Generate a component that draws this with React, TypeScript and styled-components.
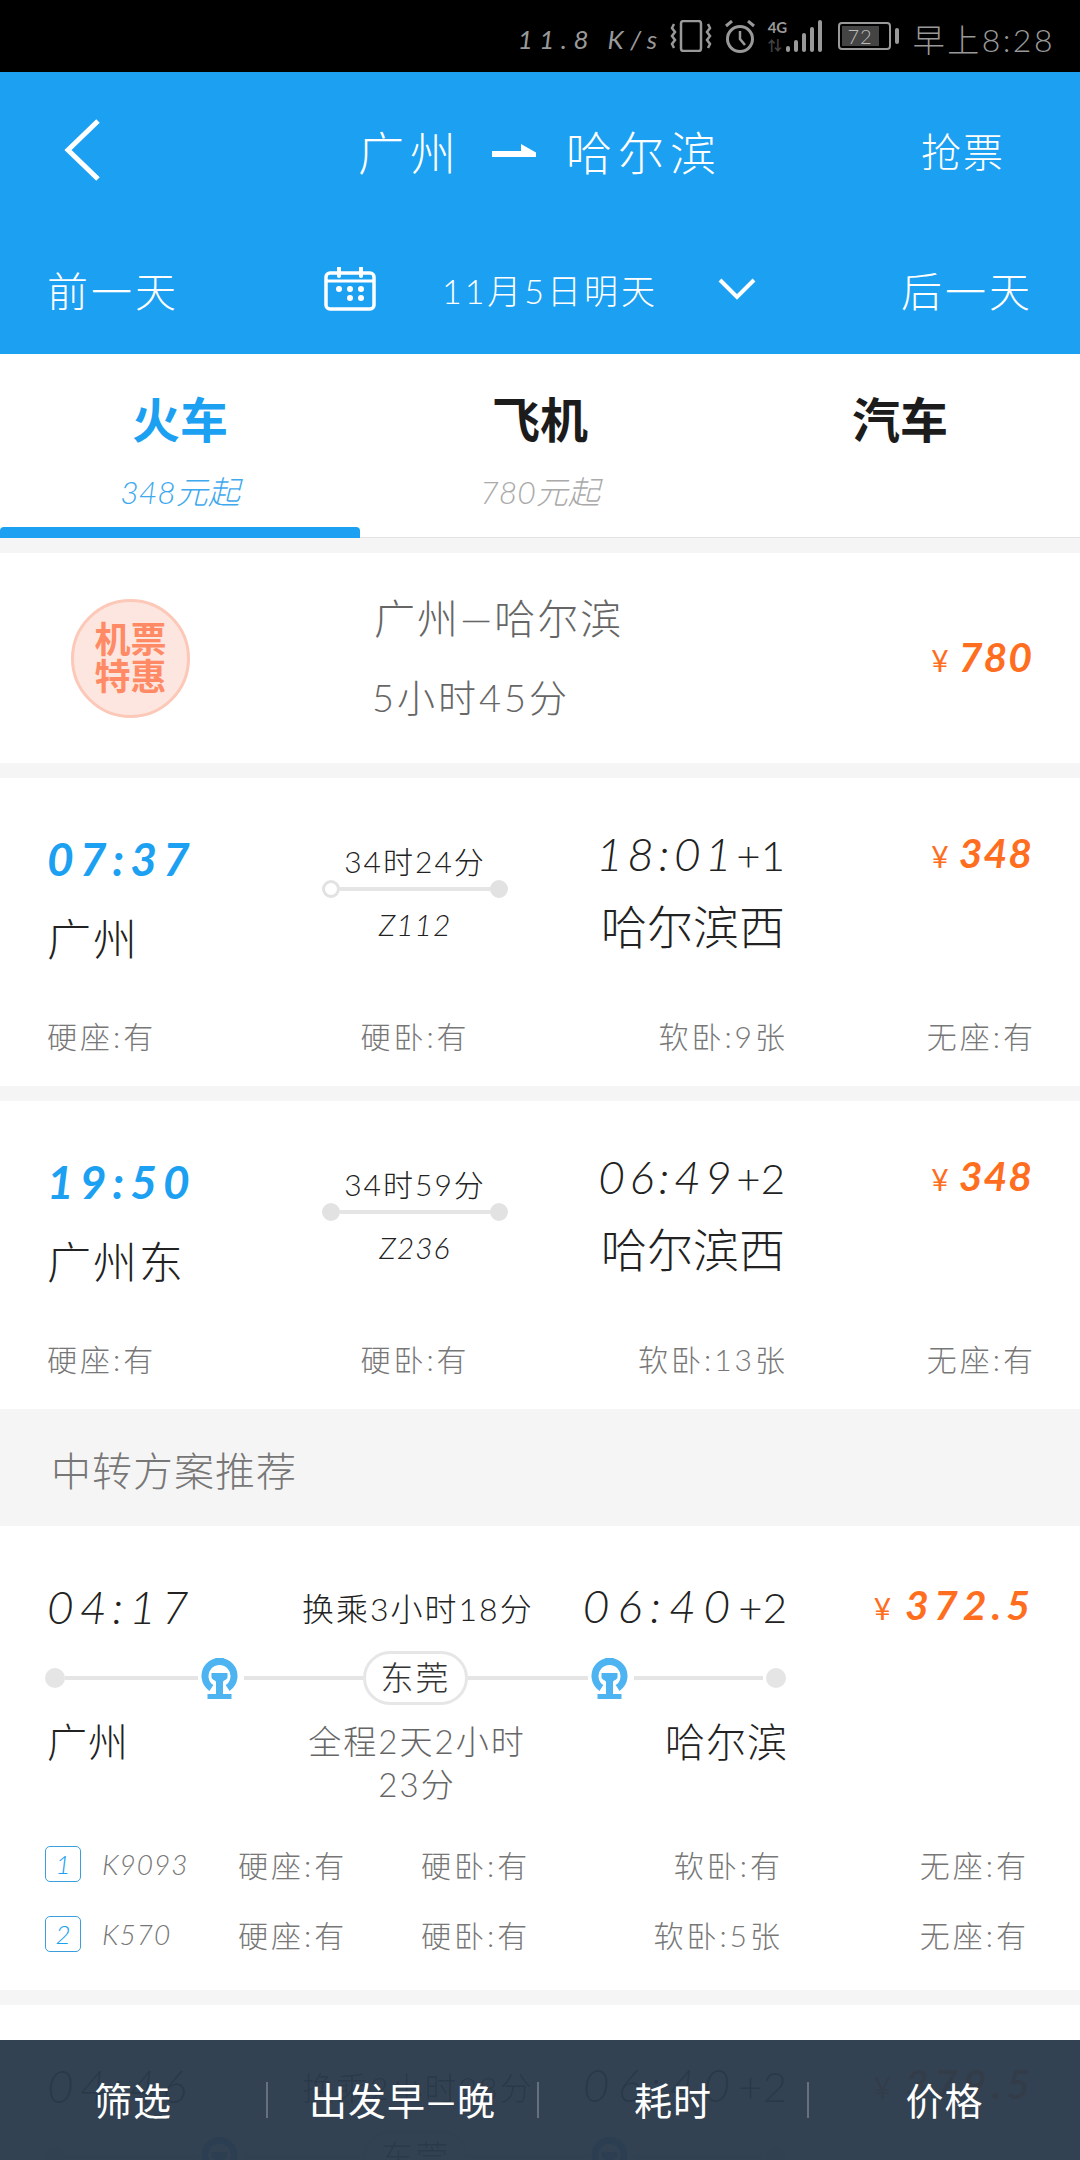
import styled, { createGlobalStyle } from "styled-components";

const FONT = `Lato, "Noto Sans CJK SC", sans-serif`;

const GlobalStyle = createGlobalStyle`
  html, body {
    margin: 0;
    padding: 0;
    background: #f5f5f5;
  }
  body {
    font-family: ${FONT};
    font-weight: 300;
  }
`;

type Seat = string;

const directTrains = [
  {
    depart: "07:37",
    from: "广州",
    duration: "34时24分",
    number: "Z112",
    arrive: "18:01",
    plus: "+1",
    to: "哈尔滨西",
    price: "348",
    hollow: true,
    seats: ["硬座:有", "硬卧:有", "软卧:9张", "无座:有"],
  },
  {
    depart: "19:50",
    from: "广州东",
    duration: "34时59分",
    number: "Z236",
    arrive: "06:49",
    plus: "+2",
    to: "哈尔滨西",
    price: "348",
    hollow: false,
    seats: ["硬座:有", "硬卧:有", "软卧:13张", "无座:有"],
  },
];

const transfers = [
  {
    depart: "04:17",
    wait: "换乘3小时18分",
    arrive: "06:40",
    price: "372.5",
    from: "广州",
    total: "全程2天2小时23分",
    to: "哈尔滨",
    legs: [
      { no: "K9093", seats: ["硬座:有", "硬卧:有", "软卧:有", "无座:有"] },
      { no: "K570", seats: ["硬座:有", "硬卧:有", "软卧:5张", "无座:有"] },
    ],
  },
  {
    depart: "04:46",
    wait: "换乘2小时28分",
    arrive: "06:40",
    price: "379.5",
    from: "",
    total: "",
    to: "",
    legs: [],
  },
];

function Chevron() {
  return (
    <svg width="38" height="22" viewBox="0 0 38 22">
      <polyline points="2,2 19,19 36,2" fill="none" stroke="#fff" strokeWidth="4" />
    </svg>
  );
}

function BackIcon() {
  return (
    <svg width="38" height="62" viewBox="0 0 38 62">
      <polyline points="35,2 5,31 35,60" fill="none" stroke="#fff" strokeWidth="5" />
    </svg>
  );
}

function HalfArrow() {
  return (
    <svg width="44" height="13" viewBox="0 0 44 13">
      <path d="M0 7h29V0l15 8.500v4.500H0z" fill="#fff" />
    </svg>
  );
}

function CalendarIcon() {
  return (
    <svg width="52" height="44" viewBox="0 0 52 44" fill="none" stroke="#fff">
      <rect x="2" y="6" width="48" height="36" rx="4" strokeWidth="3.5" />
      <line x1="2" y1="14" x2="50" y2="14" strokeWidth="3" />
      <line x1="15" y1="1" x2="15" y2="9" strokeWidth="4" strokeLinecap="round" />
      <line x1="37" y1="1" x2="37" y2="9" strokeWidth="4" strokeLinecap="round" />
      <g fill="#fff" stroke="none">
        <circle cx="15" cy="22" r="3" />
        <circle cx="26" cy="22" r="3" />
        <circle cx="37" cy="22" r="3" />
        <circle cx="26" cy="31" r="3" />
        <circle cx="37" cy="31" r="3" />
      </g>
    </svg>
  );
}

function RailLogo() {
  return (
    <LogoSvg width="37" height="41" viewBox="0 0 37 41" fill="#4db3f1">
      <path d="M14.500 0h8l1.500 4h-11z" />
      <path
        d="M10.400 30A14.500 14.500 0 1 1 26.600 30"
        fill="none"
        stroke="#4db3f1"
        strokeWidth="7"
      />
      <path d="M10.500 15h16v4c0 3-4 3-4.500 5v12h8.500v5h-24v-5H15V24c-.5-2-4.500-2-4.500-5z" />
    </LogoSvg>
  );
}

function VibrateIcon() {
  return (
    <svg width="42" height="32" viewBox="0 0 42 32" fill="none" stroke="#999">
      <rect x="11" y="1" width="20" height="30" rx="2.500" strokeWidth="2.500" />
      <path d="M4 4l-2 4 3 4-3 4 3 4-3 4 2 4" strokeWidth="2.500" />
      <path d="M38 4l2 4-3 4 3 4-3 4 3 4-2 4" strokeWidth="2.500" />
    </svg>
  );
}

function AlarmIcon() {
  return (
    <svg width="32" height="33" viewBox="0 0 32 33" fill="none" stroke="#999">
      <circle cx="16" cy="19" r="12.500" strokeWidth="3" />
      <path d="M16 11v8l5 6" strokeWidth="2.500" />
      <path d="M2 6l6-5M30 6l-6-5" strokeWidth="3" />
    </svg>
  );
}

function SignalIcon() {
  return (
    <svg width="36" height="33" viewBox="0 0 36 33" fill="#999">
      <rect x="0" y="26" width="4" height="6" rx="2" />
      <rect x="8" y="20" width="4" height="12" rx="2" />
      <rect x="16" y="13" width="4" height="19" rx="2" />
      <rect x="24" y="7" width="4" height="25" rx="2" />
      <rect x="32" y="0" width="4" height="32" rx="2" />
    </svg>
  );
}

function Price({ value, large }: { value: string; large?: boolean }) {
  return (
    <PriceBox $large={large}>
      <Yen>¥</Yen>
      {value}
    </PriceBox>
  );
}

function Clock({
  value,
  plus,
  accent,
  spacing = 6,
}: {
  value: string;
  plus?: string;
  accent?: boolean;
  spacing?: number;
}) {
  return (
    <ClockText $accent={accent} $spacing={spacing}>
      {value}
      {plus && <Plus>{plus}</Plus>}
    </ClockText>
  );
}

export default function App() {
  return (
    <Page>
      <GlobalStyle />
      <StatusBar>
        <StatusText>11.8 K/s</StatusText>
        <StatusIcons>
          <VibrateIcon />
          <AlarmIcon />
          <Network>
            <NetworkLabel>
              4G
              <NetworkArrows>⇅</NetworkArrows>
            </NetworkLabel>
            <SignalIcon />
          </Network>
        </StatusIcons>
        <Battery>
          <BatteryFill>72</BatteryFill>
        </Battery>
        <StatusTime>早上8:28</StatusTime>
      </StatusBar>

      <Header>
        <TitleRow>
          <BackButton>
            <BackIcon />
          </BackButton>
          <Title>
            <span>广州</span>
            <HalfArrow />
            <span>哈尔滨</span>
          </Title>
          <GrabLink>抢票</GrabLink>
        </TitleRow>
        <DateRow>
          <DayLink>前一天</DayLink>
          <DatePicker>
            <CalendarIcon />
            <DateText>11月5日明天</DateText>
            <Chevron />
          </DatePicker>
          <DayLink $right>后一天</DayLink>
        </DateRow>
      </Header>

      <Tabs>
        <Tab>
          <TabName $active>火车</TabName>
          <TabSub $active>348元起</TabSub>
          <TabBar />
        </Tab>
        <Tab>
          <TabName>飞机</TabName>
          <TabSub>780元起</TabSub>
        </Tab>
        <Tab>
          <TabName>汽车</TabName>
        </Tab>
      </Tabs>

      <PromoCard>
        <PromoBadge>
          机票
          <br />
          特惠
        </PromoBadge>
        <PromoInfo>
          <div>广州—哈尔滨</div>
          <PromoDuration>5小时45分</PromoDuration>
        </PromoInfo>
        <Price value="780" />
      </PromoCard>

      {directTrains.map((t) => (
        <TrainCard key={t.number}>
          <DepartCol>
            <Clock value={t.depart} accent />
            <FromStation>{t.from}</FromStation>
          </DepartCol>
          <MiddleCol>
            <Duration>{t.duration}</Duration>
            <Track>
              <TrackDot $hollow={t.hollow} />
              <TrackLine />
              <TrackDot />
            </Track>
            <TrainNo>{t.number}</TrainNo>
          </MiddleCol>
          <ArriveCol>
            <Clock value={t.arrive} plus={t.plus} spacing={4.5} />
            <ToStation>{t.to}</ToStation>
          </ArriveCol>
          <PriceCol>
            <Price value={t.price} />
          </PriceCol>
          {t.seats.map((s: Seat, i) => (
            <SeatCell key={i} $right={i > 1} $center={i === 1}>
              {s}
            </SeatCell>
          ))}
        </TrainCard>
      ))}

      <SectionTitle>中转方案推荐</SectionTitle>

      {transfers.map((t) => (
        <TransferCard key={t.depart}>
          <TransferTop>
            <Clock value={t.depart} />
            <WaitText>{t.wait}</WaitText>
            <RightCell>
              <Clock value={t.arrive} plus="+2" spacing={8} />
            </RightCell>
            <RightCell>
              <Price value={t.price} large />
            </RightCell>
          </TransferTop>
          <Timeline>
            <EndDot />
            <LineSeg $w={133} />
            <RailLogo />
            <LineSeg $w={119} />
            <TransferPill>东莞</TransferPill>
            <LineSeg $w={120} />
            <RailLogo />
            <LineSeg $w={129} />
            <EndDot />
          </Timeline>
          <Stations>
            <StationName>{t.from}</StationName>
            <TotalText>{t.total}</TotalText>
            <StationName $right>{t.to}</StationName>
          </Stations>
          <Legs>
            {t.legs.map((leg, i) => (
              <LegRow key={leg.no}>
                <LegName>
                  <LegIndex>{i + 1}</LegIndex>
                  <LegNo>{leg.no}</LegNo>
                </LegName>
                {leg.seats.map((s: Seat, j) => (
                  <LegSeat key={j} $right={j > 1}>
                    {s}
                  </LegSeat>
                ))}
              </LegRow>
            ))}
          </Legs>
        </TransferCard>
      ))}

      <BottomBar>
        <BottomItem>筛选</BottomItem>
        <BottomItem>出发早—晚</BottomItem>
        <BottomItem>耗时</BottomItem>
        <BottomItem>价格</BottomItem>
      </BottomBar>
    </Page>
  );
}

const Page = styled.div`
  position: relative;
  width: 1080px;
  height: 2160px;
  overflow: hidden;
  background: #f5f5f5;
`;

const StatusBar = styled.div`
  height: 72px;
  background: #000;
  color: #999;
  display: flex;
  align-items: center;
  justify-content: flex-end;
  padding-right: 25px;
`;

const StatusText = styled.span`
  margin-top: 6px;
  font-size: 26px;
  font-weight: 400;
  font-style: italic;
  letter-spacing: 6.5px;
  margin-right: 6px;
`;

const StatusIcons = styled.div`
  display: flex;
  align-items: center;
  gap: 12px;
  margin-right: 16px;
`;

const Network = styled.div`
  display: flex;
  align-items: flex-start;
`;

const NetworkLabel = styled.span`
  width: 18px;
  display: flex;
  flex-direction: column;
  font-size: 15px;
  font-weight: 700;
  line-height: 15px;
`;

const NetworkArrows = styled.span`
  margin-top: 2px;
  font-size: 14px;
  line-height: 16px;
  color: #444;
`;

const Battery = styled.div`
  position: relative;
  width: 53px;
  height: 28px;
  box-sizing: border-box;
  border: 2px solid #999;
  border-radius: 4px;
  padding: 2px;
  margin-right: 22px;

  &::after {
    content: "";
    position: absolute;
    right: -10px;
    top: 4px;
    width: 4px;
    height: 16px;
    border-radius: 2px;
    background: #999;
  }
`;

const BatteryFill = styled.div`
  width: 37px;
  height: 20px;
  background: #444;
  color: #bbb;
  font-size: 20px;
  line-height: 20px;
  text-align: center;
  letter-spacing: 1px;
`;

const StatusTime = styled.span`
  margin-top: 4px;
  font-size: 32px;
  letter-spacing: 2.5px;
`;

const Header = styled.header`
  height: 282px;
  background: #1ca0f2;
  color: #fff;
`;

const TitleRow = styled.div`
  height: 156px;
  padding: 0 75px;
  display: grid;
  grid-template-columns: 1fr auto 1fr;
  align-items: center;
`;

const BackButton = styled.div`
  margin-left: -12px;
  display: flex;
`;

const Title = styled.div`
  display: flex;
  align-items: center;
  gap: 30px;
  font-size: 46px;
  letter-spacing: 6px;
`;

const GrabLink = styled.div`
  justify-self: end;
  font-size: 40px;
  letter-spacing: 2px;
`;

const DateRow = styled.div`
  height: 122px;
  padding: 0 47px;
  display: grid;
  grid-template-columns: 1fr auto 1fr;
  align-items: center;
`;

const DayLink = styled.div<{ $right?: boolean }>`
  font-size: 41px;
  letter-spacing: 3px;
  text-align: ${(p) => (p.$right ? "right" : "left")};
`;

const DatePicker = styled.div`
  display: flex;
  align-items: center;
  gap: 66px;
`;

const DateText = styled.span`
  font-size: 34px;
  letter-spacing: 3px;
  margin-right: -6px;
`;

const Tabs = styled.div`
  height: 184px;
  background: #fff;
  box-shadow: inset 0 -1px #e3e3e3;
  display: grid;
  grid-template-columns: repeat(3, 360px);
`;

const Tab = styled.div`
  display: flex;
  flex-direction: column;
  align-items: center;
`;

const TabName = styled.div<{ $active?: boolean }>`
  margin-top: 38px;
  font-size: 48px;
  line-height: 56px;
  font-weight: 700;
  color: ${(p) => (p.$active ? "#1ca0f2" : "#1c1c1c")};
`;

const TabSub = styled.div<{ $active?: boolean }>`
  margin-top: 24px;
  font-size: 32px;
  line-height: 40px;
  font-style: italic;
  color: ${(p) => (p.$active ? "#3fa9ee" : "#aaa")};
`;

const TabBar = styled.div`
  margin-top: auto;
  width: 100%;
  height: 11px;
  background: #1ca0f2;
  border-radius: 4px 4px 0 0;
`;

const PromoCard = styled.section`
  height: 210px;
  margin: 15px 0;
  background: #fff;
  display: flex;
  align-items: center;
  padding: 0 47px 0 71px;
`;

const PromoBadge = styled.div`
  box-sizing: border-box;
  width: 119px;
  height: 119px;
  flex-shrink: 0;
  border-radius: 50%;
  border: 3px solid #fcc8b8;
  background: #fde6df;
  color: #ff8a65;
  font-size: 36px;
  font-weight: 700;
  line-height: 37px;
  text-align: center;
  display: flex;
  align-items: center;
  justify-content: center;
`;

const PromoInfo = styled.div`
  flex: 1;
  margin-left: 184px;
  color: #666;
  font-size: 41px;
  line-height: 79px;
  letter-spacing: 2px;
`;

const PromoDuration = styled.div`
  font-size: 38px;
  letter-spacing: 3px;
  margin-left: -2px;
`;

const PriceBox = styled.div<{ $large?: boolean }>`
  color: #ff6d1f;
  font-size: 41px;
  line-height: 50px;
  font-weight: 700;
  font-style: italic;
  letter-spacing: ${(p) => (p.$large ? "5px" : "1px")};
  white-space: nowrap;
`;

const Yen = styled.span`
  font-size: 30px;
  font-weight: 400;
  font-style: normal;
  margin-right: 9px;
`;

const ClockText = styled.div<{ $accent?: boolean; $spacing: number }>`
  color: ${(p) => (p.$accent ? "#1ca0f2" : "#222")};
  font-size: 46px;
  line-height: 50px;
  font-style: italic;
  font-weight: ${(p) => (p.$accent ? 700 : 300)};
  letter-spacing: ${(p) => p.$spacing}px;
  white-space: nowrap;
`;

const Plus = styled.span`
  font-size: 42px;
  font-style: normal;
  letter-spacing: 0;
`;

const TrainCard = styled.section`
  box-sizing: border-box;
  height: 308px;
  margin-bottom: 15px;
  padding: 0 47px;
  background: #fff;
  display: grid;
  grid-template-columns: 275px 186px 277px 248px;
  grid-template-rows: 236px 44px;
`;

const DepartCol = styled.div`
  padding-top: 56px;
`;

const FromStation = styled.div`
  margin-top: 28px;
  font-size: 44px;
  line-height: 54px;
  color: #222;
  letter-spacing: 2px;
`;

const MiddleCol = styled.div`
  padding-top: 65px;
  display: flex;
  flex-direction: column;
  align-items: center;
`;

const Duration = styled.div`
  font-size: 30px;
  line-height: 36px;
  color: #222;
  letter-spacing: 2px;
  white-space: nowrap;
`;

const Track = styled.div`
  width: 100%;
  height: 20px;
  display: flex;
  align-items: center;
`;

const TrackDot = styled.div<{ $hollow?: boolean }>`
  box-sizing: border-box;
  width: 18px;
  height: 18px;
  flex-shrink: 0;
  border-radius: 50%;
  border: 3px solid #e2e2e2;
  background: ${(p) => (p.$hollow ? "#fff" : "#e2e2e2")};
`;

const TrackLine = styled.div`
  flex: 1;
  height: 4px;
  background: #e5e5e5;
`;

const TrainNo = styled.div`
  margin-top: 7px;
  font-size: 30px;
  line-height: 36px;
  font-style: italic;
  color: #222;
  letter-spacing: 1px;
`;

const ArriveCol = styled.div`
  padding-top: 51px;
  display: flex;
  flex-direction: column;
  align-items: flex-end;
`;

const ToStation = styled.div`
  margin-top: 20px;
  font-size: 46px;
  line-height: 54px;
  color: #222;
  white-space: nowrap;
`;

const PriceCol = styled.div`
  padding-top: 50px;
  display: flex;
  justify-content: flex-end;
`;

const SeatCell = styled.div<{ $right?: boolean; $center?: boolean }>`
  font-size: 30px;
  line-height: 44px;
  color: #777;
  letter-spacing: 3px;
  white-space: nowrap;
  text-align: ${(p) => (p.$right ? "right" : p.$center ? "center" : "left")};
  margin-right: ${(p) => (p.$right ? "-3px" : "0")};
`;

const SectionTitle = styled.h2`
  margin: 0;
  height: 117px;
  margin-top: -15px;
  padding-left: 51px;
  font-size: 40px;
  font-weight: 300;
  line-height: 124px;
  color: #777;
  letter-spacing: 1px;
`;

const TransferCard = styled.section`
  box-sizing: border-box;
  height: 464px;
  margin-bottom: 15px;
  padding: 54px 47px 0 45px;
  background: #fff;
`;

const TransferTop = styled.div`
  display: grid;
  grid-template-columns: 255px 230px 255px 248px;
  align-items: center;
  padding-left: 2px;
  height: 50px;
`;

const WaitText = styled.div`
  font-size: 32px;
  color: #222;
  letter-spacing: 2px;
  text-align: center;
  white-space: nowrap;
`;

const RightCell = styled.div`
  display: flex;
  justify-content: flex-end;
`;

const Timeline = styled.div`
  margin-top: 21px;
  height: 54px;
  display: flex;
  align-items: center;
`;

const EndDot = styled.div`
  width: 20px;
  height: 20px;
  flex-shrink: 0;
  border-radius: 50%;
  background: #e5e5e5;
`;

const LogoSvg = styled.svg`
  flex-shrink: 0;
`;

const LineSeg = styled.div<{ $w: number }>`
  width: ${(p) => p.$w}px;
  height: 4px;
  background: #e5e5e5;
  margin-right: 3px;

  ${LogoSvg} + & {
    margin-left: 6px;
  }
`;

const TransferPill = styled.div`
  box-sizing: border-box;
  width: 105px;
  height: 54px;
  margin-left: -3px;
  flex-shrink: 0;
  border: 3px solid #e6e6e6;
  border-radius: 27px;
  font-size: 33px;
  line-height: 46px;
  text-align: center;
  color: #333;
  letter-spacing: 2px;
`;

const Stations = styled.div`
  margin-top: 15px;
  width: 741px;
  height: 86px;
  display: grid;
  grid-template-columns: 255px 230px 256px;
  padding-left: 2px;
  box-sizing: border-box;
`;

const StationName = styled.div<{ $right?: boolean }>`
  font-size: 40px;
  line-height: 44px;
  color: #222;
  letter-spacing: 1px;
  text-align: ${(p) => (p.$right ? "right" : "left")};
`;

const TotalText = styled.div`
  padding: 0 6px;
  font-size: 33px;
  line-height: 43px;
  color: #666;
  letter-spacing: 2px;
  text-align: center;
`;

const Legs = styled.div`
  margin-top: 23px;
`;

const LegRow = styled.div`
  height: 70px;
  display: grid;
  grid-template-columns: 193px 183px 130px 229px 246px;
  align-items: center;
`;

const LegName = styled.div`
  display: flex;
  align-items: center;
`;

const LegIndex = styled.div`
  box-sizing: border-box;
  width: 36px;
  height: 36px;
  border: 1px solid #3a9fdc;
  border-radius: 5px;
  color: #1ca0f2;
  font-size: 26px;
  font-style: italic;
  line-height: 34px;
  text-align: center;
`;

const LegNo = styled.span`
  margin-left: 21px;
  font-size: 28px;
  font-style: italic;
  color: #777;
  letter-spacing: 1px;
`;

const LegSeat = styled.div<{ $right?: boolean }>`
  font-size: 30px;
  color: #777;
  letter-spacing: 3px;
  white-space: nowrap;
  text-align: ${(p) => (p.$right ? "right" : "left")};
  margin-right: ${(p) => (p.$right ? "-3px" : "0")};
`;

const BottomBar = styled.nav`
  position: absolute;
  left: 0;
  right: 0;
  bottom: 0;
  height: 120px;
  background: rgba(43, 58, 75, 0.96);
  display: grid;
  grid-template-columns: 268px 271px 270px 271px;
  align-items: center;
`;

const BottomItem = styled.div`
  height: 36px;
  line-height: 36px;
  font-size: 38px;
  font-weight: 400;
  letter-spacing: 1px;
  color: #fff;
  text-align: center;
  border-right: 2px solid rgba(255, 255, 255, 0.25);

  &:last-child {
    border-right: none;
  }
`;
